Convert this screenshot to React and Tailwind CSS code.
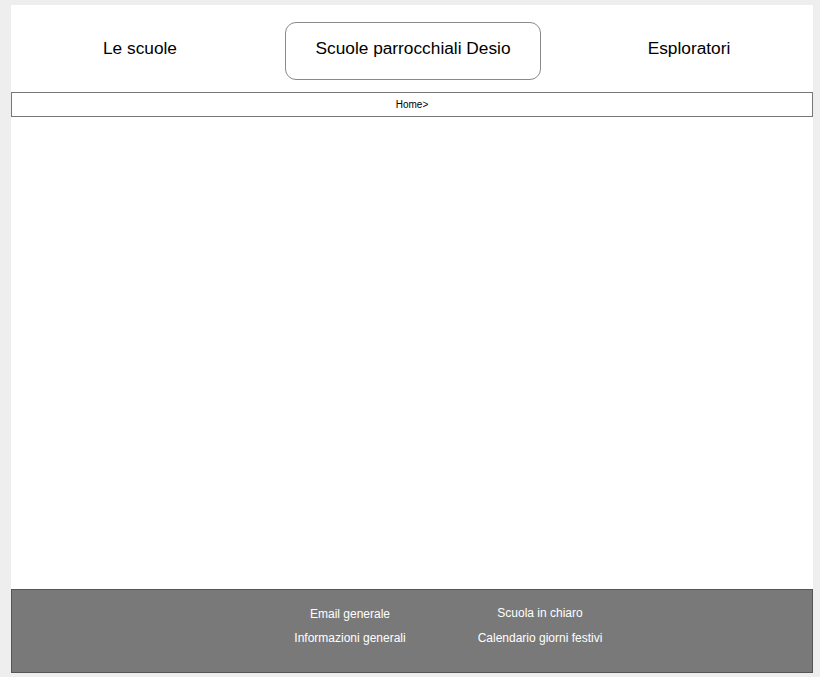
export default function App() {
  return (
    <div
      className="min-h-[677px] bg-[#eeeeee] pt-[5px] pl-[11px] pr-[7px] pb-[4px]"
      style={{ fontFamily: '"Liberation Sans", Arial, sans-serif' }}
    >
      <div className="w-[802px] bg-white flex flex-col">
        {/* header nav */}
        <div className="h-[87px] flex items-start pt-[17px]">
          <div className="w-[258px] h-[58px] pb-[4px] flex items-center justify-center text-[17.3px] text-black">
            Le scuole
          </div>
          <div className="ml-[16px] w-[256px] h-[58px] pb-[4px] flex items-center justify-center rounded-[11px] border border-[#8a8a8a] text-[17.3px] text-black">
            Scuole parrocchiali Desio
          </div>
          <div className="flex-1 pl-[24px] h-[58px] pb-[4px] flex items-center justify-center text-[17.3px] text-black">
            Esploratori
          </div>
        </div>

        {/* breadcrumb */}
        <div className="h-[25px] border border-[#777777] flex items-center justify-center text-[10px] text-black">
          Home&gt;
        </div>

        {/* content */}
        <div className="h-[472px]"></div>

        {/* footer */}
        <div className="h-[84px] bg-[#797979] border border-[#555555] pt-[12px] pl-[243px] flex">
          <div className="w-[190px] flex flex-col items-center text-[12px] text-white leading-[24px]">
            <span>Email generale</span>
            <span>Informazioni generali</span>
          </div>
          <div className="w-[190px] flex flex-col items-center text-[12px] text-white leading-[24px] -mt-[1px]">
            <span>Scuola in chiaro</span>
            <span className="mt-[1px]">Calendario giorni festivi</span>
          </div>
        </div>
      </div>
    </div>
  );
}
